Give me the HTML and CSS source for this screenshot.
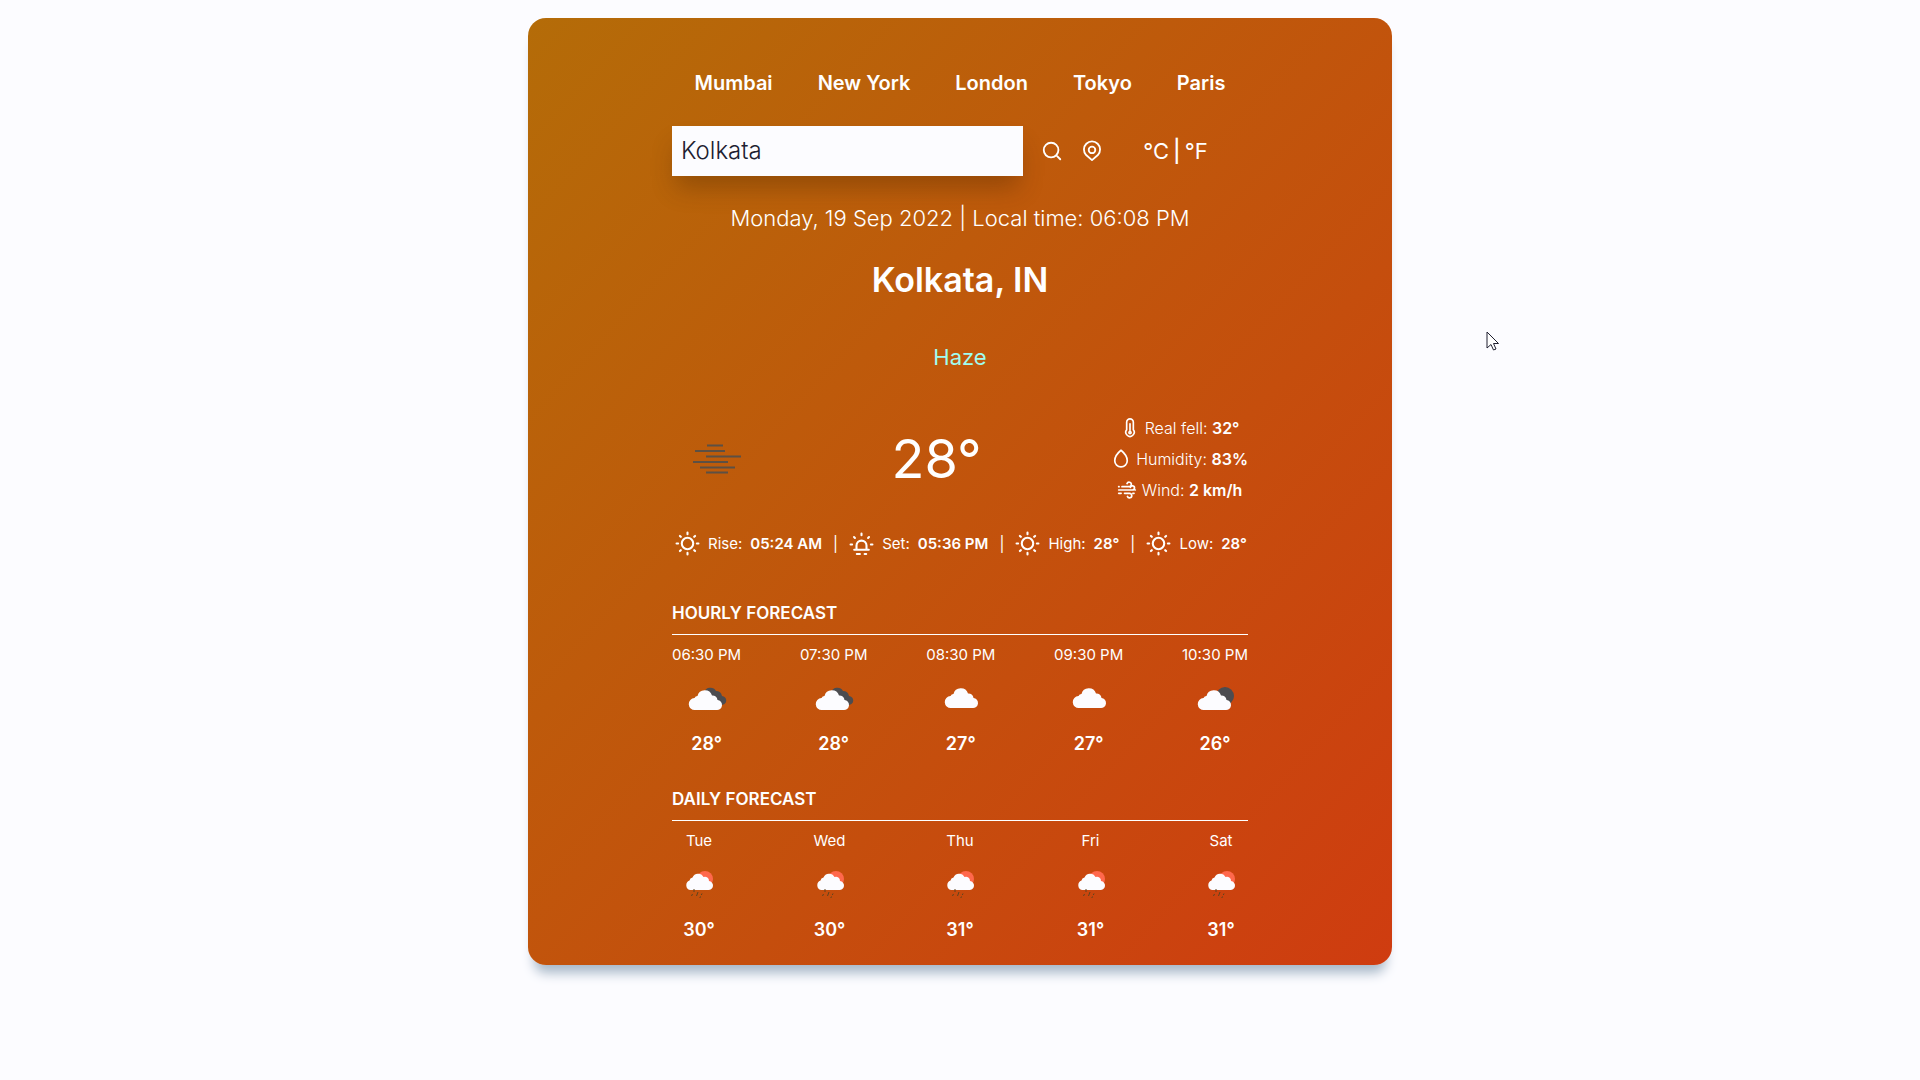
FILE: index.html
```html
<!DOCTYPE html>
<html lang="en">
<head>
<meta charset="utf-8">
<meta name="viewport" content="width=device-width, initial-scale=1">
<title>Weather</title>
<link rel="stylesheet" href="styles.css">
</head>
<body>
<svg class="sprite" aria-hidden="true">
  <symbol id="search" viewBox="0 0 24 24"><path class="line" d="M19 11a8 8 0 1 1-16 0a8 8 0 0 1 16 0zM16.800 16.800L21 21"/></symbol>
  <symbol id="pin" viewBox="0 0 24 24"><path class="line" d="M12 22l-6.400-5.600a8.800 8.800 0 1 1 12.800 0z"/><circle class="line" cx="12" cy="10.800" r="3.600"/></symbol>
  <symbol id="sun" viewBox="0 0 24 24"><circle class="line" cx="12" cy="12" r="5.500"/><path class="line" d="M12 1.500v1.500M12 21v1.500M1.500 12H3M21 12h1.500M4.700 4.700l.9.9M18.400 18.400l.9.9M4.700 19.300l.9-.9M18.400 5.600l.9-.9"/></symbol>
  <symbol id="sunset" viewBox="0 0 24 24"><path class="line" d="M5 18h14M7.200 18v-4a4.800 4.800 0 0 1 9.600 0v4M12 2.500V4M1.500 13H3M21 13h1.500M4.800 5.800l.9.900M18.300 6.700l.9-.9M7.500 22h3M15 22h1.500"/></symbol>
  <symbol id="thermo" viewBox="0 0 24 24"><path class="line" d="M8 14V5a4 4 0 0 1 8 0v9a5 5 0 1 1-8 0zM12 7v8"/><circle class="line" cx="12" cy="17.500" r="1.300"/></symbol>
  <symbol id="drop" viewBox="0 0 24 24"><path class="line" d="M12 1.500c4.300 3.500 7.500 7.500 7.500 12.500a7.500 7.500 0 0 1-15 0c0-5 3.200-9 7.500-12.500z"/></symbol>
  <symbol id="wind" viewBox="0 0 24 24"><path class="line" d="M6 8h8.500a2.700 2.700 0 1 0-2.500-3.700M2 8h.5M2 12h16.500a2.500 2.500 0 1 0-2.400-3.200M21.500 12h.5M9 16h6a2.700 2.700 0 1 1-2.500 3.700M2 16h3M19 16h1.500"/></symbol>
  <symbol id="haze" viewBox="0 0 50 32"><path d="M15 2.500h16M3 8h30M14 13.500h35M1 19h35M8 24.500h35M14 29.500h22"/></symbol>
  <symbol id="cloud" viewBox="0 0 54 54"><path class="white" d="M17 37a6 6 0 0 1-.5-12a3.500 3.500 0 0 1 3-2a7.500 7.500 0 0 1 14.500-.5a5 5 0 0 1 5.500 4.500a5 5 0 0 1-1 10z"/></symbol>
  <symbol id="clouds" viewBox="0 0 54 54"><path class="slate" d="M24 22a6.500 6.500 0 0 1 12-2q5 0 6 5a4.500 4.500 0 0 1-.5 9h-7z"/><path class="white" d="M15 39a6 6 0 0 1-.5-12a3.500 3.500 0 0 1 3-2a7.500 7.500 0 0 1 14.500-.5a5 5 0 0 1 5.500 4.500a5 5 0 0 1-1 10z"/></symbol>
  <symbol id="mooncloud" viewBox="0 0 54 54"><circle class="slate" cx="37" cy="25" r="9"/><path class="white" d="M16 39a6 6 0 0 1-.5-12a3.500 3.500 0 0 1 3-2a7.500 7.500 0 0 1 14.500-.5a5 5 0 0 1 5.500 4.500a5 5 0 0 1-1 10z"/></symbol>
  <symbol id="rain" viewBox="0 0 54 54"><circle class="coral" cx="33" cy="22" r="8"/><path class="white" d="M18 33a5 5 0 0 1-.5-9.500a3.500 3.500 0 0 1 3-3a6 6 0 0 1 11-.5a4 4 0 0 1 5.500 4a4.500 4.500 0 0 1-1 9z"/><path class="drops" d="M22 32v3M20.500 37l-1 2M26 35l-1.500 4M30 36.500l-.7 1.500M28.500 39.500l-.7 1.500"/></symbol>
</svg>

<main class="card">
  <nav class="cities">
    <button type="button">Mumbai</button>
    <button type="button">New York</button>
    <button type="button">London</button>
    <button type="button">Tokyo</button>
    <button type="button">Paris</button>
  </nav>

  <form class="search">
    <input type="text" aria-label="City" value="Kolkata">
    <div class="actions">
      <button type="button" aria-label="Search"><svg><use href="#search"/></svg></button>
      <button type="button" aria-label="Use my location"><svg><use href="#pin"/></svg></button>
    </div>
    <div class="units">
      <button type="button">°C</button><span>|</span><button type="button">°F</button>
    </div>
  </form>

  <p class="date">Monday, 19 Sep 2022 | Local time: 06:08 PM</p>
  <h1>Kolkata, IN</h1>
  <p class="condition">Haze</p>

  <section class="now">
    <div class="now-icon"><svg><use href="#haze"/></svg></div>
    <p class="temperature">28°</p>
    <ul class="details">
      <li><svg><use href="#thermo"/></svg><span>Real fell: <b>32°</b></span></li>
      <li><svg><use href="#drop"/></svg><span>Humidity: <b>83%</b></span></li>
      <li><svg><use href="#wind"/></svg><span>Wind: <b>2 km/h</b></span></li>
    </ul>
  </section>

  <ul class="sun">
    <li><svg><use href="#sun"/></svg>Rise: <b>05:24 AM</b></li>
    <li>|</li>
    <li><svg><use href="#sunset"/></svg>Set: <b>05:36 PM</b></li>
    <li>|</li>
    <li><svg><use href="#sun"/></svg>High: <b>28°</b></li>
    <li>|</li>
    <li><svg><use href="#sun"/></svg>Low: <b>28°</b></li>
  </ul>

  <section class="forecast">
    <h2>HOURLY FORECAST</h2>
    <ul>
      <li><span>06:30 PM</span><svg><use href="#clouds"/></svg><b>28°</b></li>
      <li><span>07:30 PM</span><svg><use href="#clouds"/></svg><b>28°</b></li>
      <li><span>08:30 PM</span><svg><use href="#cloud"/></svg><b>27°</b></li>
      <li><span>09:30 PM</span><svg><use href="#cloud"/></svg><b>27°</b></li>
      <li><span>10:30 PM</span><svg><use href="#mooncloud"/></svg><b>26°</b></li>
    </ul>
  </section>

  <section class="forecast">
    <h2>DAILY FORECAST</h2>
    <ul>
      <li><span>Tue</span><svg><use href="#rain"/></svg><b>30°</b></li>
      <li><span>Wed</span><svg><use href="#rain"/></svg><b>30°</b></li>
      <li><span>Thu</span><svg><use href="#rain"/></svg><b>31°</b></li>
      <li><span>Fri</span><svg><use href="#rain"/></svg><b>31°</b></li>
      <li><span>Sat</span><svg><use href="#rain"/></svg><b>31°</b></li>
    </ul>
  </section>
</main>

<svg class="pointer" viewBox="0 0 13 20" aria-hidden="true"><path d="M1 1v16l4-3.500 2.500 5.500 2.500-1-2.500-5.500h5z"/></svg>
</body>
</html>
```
FILE: styles.css
```css
* {
  box-sizing: border-box;
  margin: 0;
  padding: 0;
}

body {
  min-height: 100vh;
  padding: 18px;
  background: #fcfcff;
  color: #fff;
  font-family: Inter, "Liberation Sans", sans-serif;
  font-size: 15px;
  font-weight: 400;
}

ul {
  list-style: none;
}

b,
h1,
h2 {
  font-weight: 600;
}

button {
  border: 0;
  background: none;
  color: inherit;
  font: inherit;
  cursor: pointer;
}

svg {
  display: block;
  flex: none;
}

.sprite {
  display: none;
}

.line {
  fill: none;
  stroke: #fff;
  stroke-width: 2;
  stroke-linecap: round;
  stroke-linejoin: round;
}

.white {
  fill: #fcfcff;
}

.slate {
  fill: #4c4c50;
}

.coral {
  fill: #ff684c;
}

.drops {
  fill: none;
  stroke: #5c4420;
  stroke-width: 1;
}

.card {
  max-width: 864px;
  margin: 0 auto;
  padding: 40px 144px 23px;
  border-radius: 18px;
  background: linear-gradient(to bottom right, #b46c08, #cf3c10);
  box-shadow: 0 14px 12px -6px #a8b8c8;
}

.cities {
  display: flex;
  justify-content: space-around;
  height: 50px;
}

.cities button {
  font-size: 20px;
  font-weight: 600;
}

.search {
  display: flex;
  align-items: center;
  margin-top: 18px;
}

.search input {
  width: 351px;
  height: 50px;
  padding: 0 9px 2px;
  border: 0;
  background: #fcfcff;
  box-shadow: 0 16px 24px -4px rgba(60, 30, 0, 0.3);
  color: #202030;
  font: inherit;
  font-size: 24px;
  font-weight: 300;
}

.actions {
  display: flex;
  gap: 18px;
  margin-left: 18px;
}

.actions svg {
  width: 22px;
  height: 22px;
}

.units {
  display: flex;
  flex: 1;
  justify-content: center;
  gap: 4px;
  font-size: 22px;
  line-height: 28px;
}

.units span {
  font-weight: 500;
}

.date {
  margin-top: 24px;
  font-size: 22px;
  font-weight: 300;
  line-height: 36px;
  text-align: center;
}

h1 {
  margin-top: 20px;
  font-size: 34px;
  line-height: 48px;
  text-align: center;
}

.condition {
  margin-top: 35px;
  color: #a0fcf0;
  font-size: 22px;
  line-height: 36px;
  text-align: center;
}

.now {
  display: flex;
  align-items: center;
  justify-content: space-between;
  margin-top: 37px;
}

.now-icon {
  display: grid;
  width: 90px;
  place-items: center;
}

.now-icon svg {
  width: 50px;
  height: 32px;
  fill: none;
  stroke: #5c5044;
  stroke-width: 2;
}

.temperature {
  font-size: 54px;
}

.details {
  font-size: 16px;
  font-weight: 300;
}

.details li {
  display: flex;
  align-items: center;
  justify-content: center;
  gap: 5px;
  height: 31px;
}

.details svg {
  width: 20px;
  height: 20px;
}

.sun {
  display: flex;
  align-items: center;
  justify-content: space-between;
  margin-top: 11px;
  padding: 0 1px 0 3px;
}

.sun li {
  display: flex;
  align-items: center;
  gap: 8px;
  height: 54px;
  white-space: nowrap;
}

.sun svg {
  width: 25px;
  height: 25px;
}

.forecast {
  margin-top: 26px;
}

.forecast h2 {
  height: 39px;
  border-bottom: 1px solid #fff;
  font-size: 17px;
  line-height: 34px;
}

.forecast ul {
  display: flex;
  justify-content: space-between;
}

.forecast li {
  display: flex;
  flex-direction: column;
  align-items: center;
}

.forecast span {
  margin-top: 6px;
  line-height: 28px;
}

.forecast svg {
  width: 54px;
  height: 54px;
  margin: 2px 0 7px;
}

.forecast b {
  font-size: 18px;
  line-height: 24px;
}

.pointer {
  position: absolute;
  top: 331px;
  left: 1486px;
  width: 13px;
  height: 20px;
  fill: #fff;
  stroke: #202030;
}
```
